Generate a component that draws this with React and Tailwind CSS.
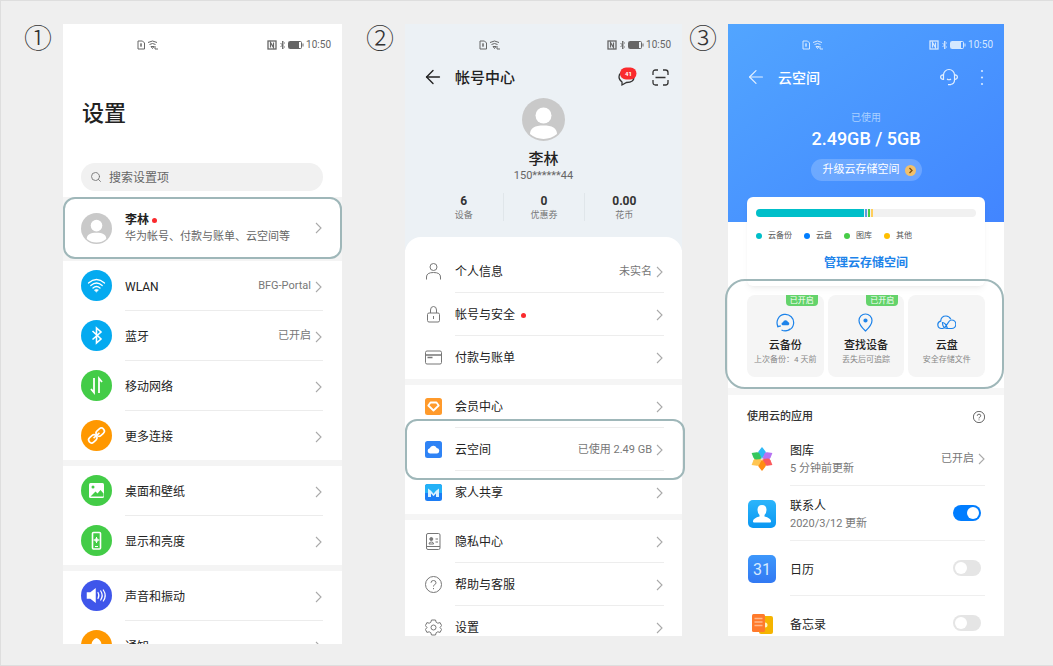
import { useState } from 'react'
import { ArrowLeft, Search } from 'lucide-react'

const Chevron = () => (
  <svg viewBox="0 0 7 12" className="w-[7px] h-3 shrink-0" fill="none" stroke="#a9a9a9" strokeWidth="1.1">
    <path d="M1 1l5 5-5 5" />
  </svg>
)

const Avatar = ({ className }) => (
  <svg viewBox="0 0 43 43" className={className}>
    <circle cx="21.5" cy="21.5" r="21.5" fill="#c9c9c9" />
    <circle cx="21.5" cy="17.5" r="8" fill="#fff" />
    <path d="M8 36c0-6 5-8.500 13.500-8.500S35 30 35 36a21 21 0 0 1-27 0z" fill="#fff" />
  </svg>
)

function StatusBar({ className }) {
  return (
    <div className={`h-[42px] pl-[74px] pr-[11px] flex items-center justify-between ${className}`}>
      <svg viewBox="0 0 21 10" className="w-[21px] h-[10px]" fill="none" stroke="currentColor">
        <path d="M1 1h4.500l2 2v6H1zM4 3v4M3 5h2" />
        <path d="M11 2.500q4.500-3 9 0M12.500 4.500q3-2 6 0M14 6.500h3l-1.500 2zM18 6v3h3" />
      </svg>
      <div className="flex items-center gap-[2px]">
        <svg viewBox="0 0 37 10" className="w-[37px] h-[10px]" fill="none" stroke="currentColor">
          <rect x="1" y="1" width="8" height="8" strokeWidth="1.300" />
          <path d="M3.500 7.500v-5l3 5v-5" strokeWidth="1.200" />
          <path d="M13.500 3l4 4-2 2V1l2 2-4 4" strokeWidth=".9" />
          <rect x="21.500" y="1.500" width="13" height="7" rx="1" />
          <rect x="22" y="2" width="10" height="6" fill="currentColor" stroke="none" />
          <path d="M36 3.500v3" />
        </svg>
        <span className="text-[10px] leading-3">10:50</span>
      </div>
    </div>
  )
}

const settingsIcons = {
  wlan: (
    <g fill="none" stroke="#fff" strokeWidth="1.300" strokeLinecap="round">
      <path d="M7.500 13q8-7 16 0M9.800 15.500q5.700-5 11.400 0M12 18q3.500-3 7 0" />
      <path d="M13.500 20q2-1.500 4 0l-2 2z" fill="#fff" strokeWidth=".5" />
    </g>
  ),
  bluetooth: (
    <path d="M11.500 11l8.500 8-4.500 4V8l4.500 4-8.500 7.500" fill="none" stroke="#fff" strokeWidth="1.600" />
  ),
  mobile: (
    <path d="M13 8v14.500l-3-3.500M18 23V8.500l3 3.500" fill="none" stroke="#fff" strokeWidth="1.800" />
  ),
  more: (
    <g fill="none" stroke="#fff" strokeWidth="1.600" transform="rotate(-42 15.500 15.500)">
      <rect x="6" y="12.500" width="9" height="6" rx="3" />
      <rect x="16" y="12.500" width="9" height="6" rx="3" />
      <path d="M11.500 15.500h8" />
    </g>
  ),
  wallpaper: (
    <g>
      <rect x="8" y="8" width="15" height="15" rx="1.500" fill="#fff" />
      <circle cx="12" cy="12" r="1.500" fill="#43cc47" />
      <path d="M9.500 21.500l5-5 2 2 3-3.500 3 3.500v3z" fill="#43cc47" />
    </g>
  ),
  display: (
    <g fill="none" stroke="#fff" strokeWidth="1">
      <rect x="11.500" y="7.500" width="8" height="16.500" rx="1" strokeWidth="1.600" />
      <circle cx="15.500" cy="15" r="1.500" />
      <path d="M15.500 12v6M12.500 15h6M14 21.500h3" />
    </g>
  ),
  sound: (
    <g fill="none" stroke="#fff" strokeWidth="1.500" strokeLinecap="round">
      <path d="M6.500 13h3l4.500-3.500v12L9.500 18h-3z" fill="#fff" />
      <path d="M17 12.500q1.800 3 0 6M19.700 11q3 4.500 0 9M22.300 10q3.800 5.500 0 11" strokeWidth="1.200" />
    </g>
  ),
  bell: <path d="M8.500 22q2-2 2-7 0-5 5-7 5 2 5 7 0 5 2 7z" fill="#fff" />,
}

const settingsGroups = [
  [
    { id: 'wlan', label: 'WLAN', value: 'BFG-Portal', color: 'bg-[#04aaf0]' },
    { id: 'bluetooth', label: '蓝牙', value: '已开启', color: 'bg-[#04aaf0]' },
    { id: 'mobile', label: '移动网络', color: 'bg-[#43cc47]' },
    { id: 'more', label: '更多连接', color: 'bg-[#ff9800]' },
  ],
  [
    { id: 'wallpaper', label: '桌面和壁纸', color: 'bg-[#43cc47]' },
    { id: 'display', label: '显示和亮度', color: 'bg-[#43cc47]' },
  ],
  [
    { id: 'sound', label: '声音和振动', color: 'bg-[#3f56ea]' },
    { id: 'bell', label: '通知', color: 'bg-[#ff9800]', cut: true },
  ],
]

function SettingsRow({ item }) {
  return (
    <li className={`group ${item.cut ? 'h-[23px] overflow-hidden' : ''}`}>
      <button type="button" className="w-full pl-[18px] pr-5 flex items-center gap-[13px] text-left">
        <span className={`size-[31px] rounded-full shrink-0 ${item.color}`}>
          <svg viewBox="0 0 31 31" className="size-[31px]">{settingsIcons[item.id]}</svg>
        </span>
        <span className="h-[49px] pt-[2px] flex-1 flex items-center gap-1">
          <span className="flex-1 text-xs text-[#222]">{item.label}</span>
          {item.value && <span className="text-[11px] text-[#777]">{item.value}</span>}
          <Chevron />
        </span>
      </button>
      <div className="h-px ml-[62px] mr-[19px] bg-[#ececec] group-last:hidden" />
    </li>
  )
}

function SettingsScreen() {
  return (
    <section className="bg-white">
      <StatusBar className="text-[#666]" />
      <h1 className="mt-8 ml-[19px] text-[22px] leading-8 font-medium text-[#222]">设置</h1>
      <label className="mt-[33px] ml-[18px] mr-[19px] h-7 px-[9px] rounded-full bg-[#f1f1f1] flex items-center gap-[7px]">
        <Search className="size-3 text-[#777]" strokeWidth={1.8} />
        <input
          type="search"
          aria-label="搜索设置项"
          placeholder="搜索设置项"
          className="flex-1 min-w-0 pt-[2px] bg-transparent text-xs text-[#333] placeholder:text-[#666] focus:outline-none"
        />
      </label>
      <div className="mt-[6px] pb-[2px] bg-[#f4f4f4]">
        <button
          type="button"
          className="w-full h-[62px] pl-4 pr-[18px] rounded-xl border-2 border-[#9fb7b9] bg-white flex items-center gap-[13px] text-left"
        >
          <Avatar className="size-[31px] shrink-0" />
          <span className="flex-1">
            <span className="flex items-center gap-[3px] text-xs leading-[18px] font-bold text-[#222]">
              李林
              <span className="size-[5px] rounded-full bg-[#fa2a2d]" />
            </span>
            <span className="block text-[11px] leading-4 text-[#666] whitespace-nowrap">
              华为帐号、付款与账单、云空间等
            </span>
          </span>
          <Chevron />
        </button>
      </div>
      <div className="flex flex-col gap-[6px] bg-[#f4f4f4]">
        {settingsGroups.map((group) => (
          <ul key={group[0].id} className="bg-white">
            {group.map((item) => (
              <SettingsRow key={item.id} item={item} />
            ))}
          </ul>
        ))}
      </div>
    </section>
  )
}

const accountIcons = {
  person: (
    <g>
      <circle cx="8.500" cy="4" r="3.500" />
      <path d="M1.500 16.500V14q0-4.500 7-4.500t7 4.500v2.500" />
    </g>
  ),
  lock: (
    <g>
      <rect x="2.500" y="7" width="12" height="9" rx="1.500" />
      <path d="M5.500 7V4q0-3.500 3-3.500t3 3.500v3M8.500 10v3" />
    </g>
  ),
  card: (
    <g>
      <rect x=".5" y="2" width="16" height="13" rx="1.500" />
      <path d="M.5 6h16M2.500 8.500h5" strokeWidth="1.300" />
    </g>
  ),
  member: (
    <g stroke="none">
      <rect width="17" height="17" rx="2.500" fill="#ff9a2b" />
      <path d="M5.500 4.500h6l2.200 3-5.200 5-5.200-5z" fill="none" stroke="#fff" strokeWidth="1.800" strokeLinejoin="round" />
    </g>
  ),
  cloud: (
    <g stroke="none">
      <rect width="17" height="17" rx="2.500" fill="#2f83f5" />
      <path d="M5 12.500a2.700 2.700 0 0 1-.3-5.300 3.800 3.800 0 0 1 7-.2 2.800 2.800 0 0 1 .5 5.500z" fill="#fff" />
    </g>
  ),
  family: (
    <g stroke="none">
      <rect width="17" height="17" rx="2.500" fill="#1c7df5" />
      <path d="M0 9V2.500Q0 0 2.500 0h12Q17 0 17 2.500V9z" fill="#24b2f7" />
      <path d="M3 4.500l3 2.200 2.500 3 2.500-3 3-2.200v8.500h-3V9.500l-2.500 2.700L6 9.500V13H3z" fill="#d9f1ff" />
    </g>
  ),
  privacy: (
    <g>
      <rect x="1.500" y=".5" width="13.500" height="16" rx="1.500" />
      <path d="M4 11q0-2 2.300-2t2.300 2zM10.500 6H13M10.500 9H13M1.500 13.500H15" />
      <circle cx="6.300" cy="6" r="1.500" fill="#777" />
    </g>
  ),
  help: (
    <g>
      <circle cx="8.500" cy="8.500" r="8" />
      <path d="M6 6.800Q6 4.500 8.500 4.500T11 6.800q0 1.200-1.300 1.800T8.500 10.500M8.500 12v1.200" />
    </g>
  ),
  gear: (
    <g>
      <path d="M6.500 1h4l.7 2.300 1.600.9 2.300-.6 1.500 3-1.600 1.900 1.600 1.900-1.500 3-2.300-.6-1.600.9-.7 2.300h-4l-.7-2.300-1.600-.9-2.300.6-1.500-3L2 8.500.400 6.600l1.500-3 2.300.6 1.600-.9z" strokeLinejoin="round" />
      <circle cx="8.500" cy="8.500" r="2.500" />
    </g>
  ),
}

const accountGroups = [
  [
    { id: 'person', label: '个人信息', value: '未实名' },
    { id: 'lock', label: '帐号与安全', dot: true },
    { id: 'card', label: '付款与账单' },
  ],
  [
    { id: 'member', label: '会员中心' },
    { id: 'cloud', label: '云空间', value: '已使用 2.49 GB', highlight: true },
    { id: 'family', label: '家人共享' },
  ],
  [
    { id: 'privacy', label: '隐私中心' },
    { id: 'help', label: '帮助与客服' },
    { id: 'gear', label: '设置', cut: true },
  ],
]

function AccountRow({ item }) {
  return (
    <li className={`group relative ${item.cut ? 'h-[30px] overflow-hidden' : ''}`}>
      <button type="button" className="w-full pl-5 pr-[18px] flex items-center gap-[13px] text-left">
        <svg viewBox="0 0 17 17" className="size-[17px] shrink-0" fill="none" stroke="#777">
          {accountIcons[item.id]}
        </svg>
        <span className="h-[43px] pt-[2px] pr-px flex-1 flex items-center gap-1 border-b border-[#ededed] group-last:border-transparent">
          <span className="flex-1 flex items-center gap-[6px] text-xs text-[#222]">
            {item.label}
            {item.dot && <span className="size-[5px] rounded-full bg-[#fa2a2d]" />}
          </span>
          {item.value && <span className="text-[11px] text-[#777]">{item.value}</span>}
          <Chevron />
        </span>
      </button>
      {item.highlight && (
        <div className="absolute -inset-y-[9px] left-0 -right-[3px] rounded-xl border-2 border-[#9fb7b9] pointer-events-none" />
      )}
    </li>
  )
}

const stats = [
  ['6', '设备'],
  ['0', '优惠券'],
  ['0.00', '花币'],
]

function AccountScreen() {
  return (
    <section className="bg-[#ecf1f5]">
      <StatusBar className="text-[#666]" />
      <header className="h-[22px] pl-[17px] pr-[13px] flex items-center">
        <button type="button" aria-label="返回">
          <ArrowLeft className="size-[22px] text-[#222]" strokeWidth={1.5} />
        </button>
        <h2 className="ml-[11px] pt-px flex-1 text-[15px] leading-[22px] font-medium text-[#222]">帐号中心</h2>
        <button type="button" aria-label="消息">
          <svg viewBox="0 0 19 20" className="w-[19px] h-5">
            <path d="M4 18v-3Q1 13 1 10q0-5 7-6h2q6 1 6 6 0 5.500-7.500 5.500z" fill="none" stroke="#333" strokeWidth="1.300" />
            <rect x="2" y=".5" width="16.500" height="12" rx="6" fill="#fa2a2d" />
            <text x="10.500" y="8.500" fill="#fff" fontSize="6" fontWeight="700" textAnchor="middle">41</text>
          </svg>
        </button>
        <button type="button" aria-label="扫一扫" className="ml-[15px]">
          <svg viewBox="0 0 17 17" className="size-[17px]" fill="none" stroke="#333" strokeWidth="1.300">
            <path d="M1 6V3.500Q1 1 3.500 1H6M11 1h2.500Q16 1 16 3.500V6M16 11v2.500q0 2.500-2.500 2.500H11M6 16H3.500Q1 16 1 13.500V11M3.500 8.500h10" />
          </svg>
        </button>
      </header>
      <div className="mt-[10px] flex flex-col items-center">
        <Avatar className="size-[43px]" />
        <p className="mt-[9px] text-[15px] leading-[18px] font-medium text-[#222]">李林</p>
        <p className="text-[11px] leading-4 text-[#666]">150******44</p>
      </div>
      <dl className="mt-[9px] px-[18px] pb-4 grid grid-cols-3 text-center">
        {stats.map(([value, label]) => (
          <div key={label} className="flex flex-col-reverse border-l border-[#e0e6ea] first:border-transparent">
            <dt className="text-[9px] leading-3 text-[#777]">{label}</dt>
            <dd className="text-xs leading-4 font-bold text-[#333]">{value}</dd>
          </div>
        ))}
      </dl>
      <div className="rounded-t-2xl bg-white pt-[13px]">
        <div className="flex flex-col gap-[6px] bg-[#f5f5f5]">
          {accountGroups.map((group) => (
            <ul key={group[0].id} className="bg-white">
              {group.map((item) => (
                <AccountRow key={item.id} item={item} />
              ))}
            </ul>
          ))}
        </div>
      </div>
    </section>
  )
}

const legend = [
  ['云备份', 'bg-[#00bfc9]'],
  ['云盘', 'bg-[#007dff]'],
  ['图库', 'bg-[#47cc47]'],
  ['其他', 'bg-[#ffbf00]'],
]

const tiles = [
  {
    title: '云备份',
    note: '上次备份：4 天前',
    on: true,
    icon: (
      <g>
        <path d="M2 13.500A8.300 8.300 0 1 1 5.500 17M1 10.500l.8 3.200 3-.8M8 17.800q4 .3 6.500-2" />
        <path d="M7 12.300a1.500 1.500 0 0 1 0-3 2.600 2.600 0 0 1 5-.2 1.700 1.700 0 0 1 .3 3.200z" fill="#1d83ea" stroke="none" />
      </g>
    ),
  },
  {
    title: '查找设备',
    note: '丢失后可追踪',
    on: true,
    icon: (
      <g>
        <path d="M9.500 18q-6.500-6-6.500-10.500a6.500 6.500 0 0 1 13 0Q16 12 9.500 18z" />
        <circle cx="9.500" cy="7.500" r="1.500" fill="#1d83ea" />
      </g>
    ),
  },
  {
    title: '云盘',
    note: '安全存储文件',
    icon: (
      <g>
        <path d="M6 15.500H4.500a3.700 3.700 0 0 1-.8-7.300Q4 3 9 3q3.300 0 4.800 3.200" />
        <path d="M5.500 15.500q1.800 0 3-1.800L12 8.500q1-1.500 2.600-1.500a4.200 4.200 0 0 1 0 8.500H10q-4.500 0-4.500-6 3 0 5 6" />
      </g>
    ),
  },
]

const petals = ['#2fb9f6', '#b673f2', '#fb5a5c', '#ff8d12', '#ffc552', '#35c75d']

const apps = [
  {
    id: 'gallery',
    name: '图库',
    note: '5 分钟前更新',
    icon: (
      <g>
        {petals.map((fill, i) => (
          <path
            key={fill}
            d="M14 14l-3.500-5q-.8-1.500.3-3L14 2l3.200 4q1.100 1.500.3 3z"
            fill={fill}
            transform={`rotate(${i * 60} 14 14)`}
          />
        ))}
        <circle cx="14" cy="14" r="1.500" fill="#fff" fillOpacity=".5" />
      </g>
    ),
  },
  {
    id: 'contacts',
    name: '联系人',
    note: '2020/3/12 更新',
    icon: (
      <g>
        <linearGradient id="contactsFill" x2="0" y2="1">
          <stop stopColor="#2cb5fb" />
          <stop offset="1" stopColor="#0a97f2" />
        </linearGradient>
        <rect width="28" height="28" rx="5" fill="url(#contactsFill)" />
        <path d="M14 5q4.500 0 4.500 5 0 3-2 5v1.500q6 1.500 6.500 4.500.2 1.500-1 1.500H6q-1.200 0-1-1.500.5-3 6.500-4.500V15q-2-2-2-5 0-5 4.500-5z" fill="#fff" />
      </g>
    ),
  },
  {
    id: 'calendar',
    name: '日历',
    icon: (
      <g>
        <linearGradient id="calendarFill" x2="0" y2="1">
          <stop stopColor="#3d97fb" />
          <stop offset="1" stopColor="#3279f3" />
        </linearGradient>
        <rect width="28" height="28" rx="5" fill="url(#calendarFill)" />
        <text x="14" y="20" fill="#d5eaff" fontSize="16" textAnchor="middle">31</text>
      </g>
    ),
  },
  {
    id: 'memo',
    name: '备忘录',
    icon: (
      <g>
        <rect x="11" y="6" width="14" height="18" rx="2" fill="#f5b400" />
        <rect x="4" y="4" width="13" height="18" rx="1.500" fill="#ff7a2b" />
        <path d="M6.500 8.500h8M6.500 12h8M6.500 15.500h8" stroke="#ffb98a" strokeWidth="1.300" />
        <path d="M17 12.500a2.500 2.500 0 0 1 0 5z" fill="#fff3c4" />
      </g>
    ),
    cut: true,
  },
]

function CloudScreen() {
  const [synced, setSynced] = useState({ contacts: true, calendar: false, memo: false })

  return (
    <section className="bg-white">
      <div className="pb-[41px] bg-linear-to-br from-[#52a5ff] to-[#4285ff] text-white">
        <StatusBar className="text-[#d5e8ff]" />
        <header className="h-[22px] pl-[17px] pr-[15px] flex items-center">
          <button type="button" aria-label="返回">
            <ArrowLeft className="size-[22px] text-[#e3f0ff]" strokeWidth={1.3} />
          </button>
          <h2 className="ml-[11px] pt-px flex-1 text-[14px] leading-[22px] font-medium">云空间</h2>
          <button type="button" aria-label="客服">
            <svg viewBox="0 0 18 18" className="size-[18px]" fill="none" stroke="#e3f0ff" strokeWidth="1.200">
              <path d="M3.500 12V7a5.500 5.500 0 0 1 11 0v5q0 4-4 4.500M3.500 6.500Q.6 7 .6 9t2.900 2.500M14.500 6.500q2.900.5 2.900 2.500t-2.900 2.500M7 11q2 1.500 4 0M8 16.700h3" />
            </svg>
          </button>
          <button type="button" aria-label="更多" className="ml-[17px]">
            <svg viewBox="0 0 14 17" className="w-[14px] h-[17px]" fill="#d5e8ff">
              <circle cx="7" cy="2" r="1.100" />
              <circle cx="7" cy="8.500" r="1.100" />
              <circle cx="7" cy="15" r="1.100" />
            </svg>
          </button>
        </header>
        <div className="mt-[22px] flex flex-col items-center">
          <p className="text-[10px] leading-4 text-[#a9d0ff]">已使用</p>
          <p className="text-lg leading-[26px] font-medium">2.49GB / 5GB</p>
          <button type="button" className="mt-[7px] h-[22px] pl-3 pr-[6px] rounded-full bg-white/20 flex items-center gap-[5px] text-[11px]">
            升级云存储空间
            <svg viewBox="0 0 11 11" className="size-[11px]">
              <circle cx="5.500" cy="5.500" r="5.500" fill="#f3c069" />
              <path d="M4.500 3l2.500 2.500L4.500 8" fill="none" stroke="#7a4d10" strokeWidth="1.300" />
            </svg>
          </button>
        </div>
      </div>
      <div className="relative -mt-[25px] mx-[19px] px-[9px] pt-3 pb-[14px] rounded-md bg-white shadow-md shadow-black/5">
        <div className="h-2 rounded-full overflow-hidden bg-[#f1f1f1] flex gap-px">
          <div className="w-[49%] bg-[#00bfc9]" />
          <div className="w-[2px] bg-[#5f9be0]" />
          <div className="w-[2px] bg-[#47cc47]" />
          <div className="w-[2px] bg-[#ffcf5c]" />
        </div>
        <ul className="mt-[13px] flex gap-3 text-[8px] leading-3 text-[#555]">
          {legend.map(([label, color]) => (
            <li key={label} className="flex items-center gap-[6px]">
              <span className={`size-[6px] rounded-full ${color}`} />
              {label}
            </li>
          ))}
        </ul>
        <a href="#storage" className="mt-3 block text-center text-xs leading-[18px] font-bold text-[#1d83ea]">
          管理云存储空间
        </a>
      </div>
      <div className="relative mt-[9px] mx-[19px] grid grid-cols-3 gap-1">
        {tiles.map((tile) => (
          <button
            key={tile.title}
            type="button"
            className="relative h-[82px] pt-[18px] rounded-lg bg-[#f5f5f5] flex flex-col items-center"
          >
            {tile.on && (
              <span className="absolute top-0 right-[6px] w-8 rounded-b bg-[#64d36b] text-center text-[8px] leading-[11px] text-white">
                已开启
              </span>
            )}
            <svg viewBox="0 0 19 19" className="size-[19px]" fill="none" stroke="#1d83ea" strokeWidth="1.200">
              {tile.icon}
            </svg>
            <span className="mt-[6px] text-[11px] leading-4 font-medium text-[#222]">{tile.title}</span>
            <span className="text-[8px] leading-3 text-[#888] whitespace-nowrap">{tile.note}</span>
          </button>
        ))}
        <div className="absolute -top-4 -bottom-3 -left-[22px] -right-[19px] rounded-[20px] border-2 border-[#9fb7b9] pointer-events-none" />
      </div>
      <div className="mt-[11px] h-[7px] bg-[#f6f6f6]" />
      <div className="pt-[13px] pb-[5px] px-[19px] flex items-center justify-between">
        <h3 className="text-[11px] leading-[18px] font-medium text-[#333]">使用云的应用</h3>
        <button type="button" aria-label="帮助">
          <svg viewBox="0 0 17 17" className="size-3" fill="none" stroke="#666" strokeWidth="1.400">
            {accountIcons.help}
          </svg>
        </button>
      </div>
      <ul>
        {apps.map((app) => (
          <li key={app.id} className={`group ${app.cut ? 'h-10 overflow-hidden' : ''}`}>
            <label className="pl-5 pr-[19px] flex items-center gap-[14px]">
              <svg viewBox="0 0 28 28" className="size-7 shrink-0">{app.icon}</svg>
              <span className="h-[55px] flex-1 flex items-center justify-between border-b border-[#efefef] group-last:border-transparent">
                <span className="pt-1">
                  <span className="block text-xs leading-[17px] text-[#222]">{app.name}</span>
                  {app.note && <span className="block text-[11px] leading-[17px] text-[#777]">{app.note}</span>}
                </span>
                {app.id === 'gallery' ? (
                  <button type="button" className="pt-[2px] flex items-center gap-1 text-[11px] text-[#777]">
                    已开启
                    <Chevron />
                  </button>
                ) : (
                  <input
                    type="checkbox"
                    role="switch"
                    checked={synced[app.id]}
                    onChange={(e) => setSynced((s) => ({ ...s, [app.id]: e.target.checked }))}
                    className="appearance-none mr-1 w-7 h-4 p-[2px] rounded-full bg-[#e5e5e5] checked:bg-[#007dff] flex items-center checked:justify-end before:size-3 before:rounded-full before:bg-white"
                  />
                )}
              </span>
            </label>
          </li>
        ))}
      </ul>
    </section>
  )
}

const Step = ({ mark, className, children }) => (
  <div className={`flex items-start gap-3 ${className}`}>
    <span className="w-[26px] shrink-0 flex justify-center text-[28px] leading-8 font-light text-[#333]">{mark}</span>
    <div className="flex-1 min-w-0">{children}</div>
  </div>
)

export default function App() {
  return (
    <main className="min-h-screen bg-[#efefef] border border-r-0 border-[#dedede] pt-[23px] pb-5 pl-6 pr-[49px] grid grid-cols-[342fr_323fr_314fr] items-start font-['Roboto','Noto_Sans_CJK_SC',sans-serif]">
      <Step mark="①" className="pr-[25px]">
        <SettingsScreen />
      </Step>
      <Step mark="②" className="pr-2">
        <AccountScreen />
      </Step>
      <Step mark="③">
        <CloudScreen />
      </Step>
    </main>
  )
}
